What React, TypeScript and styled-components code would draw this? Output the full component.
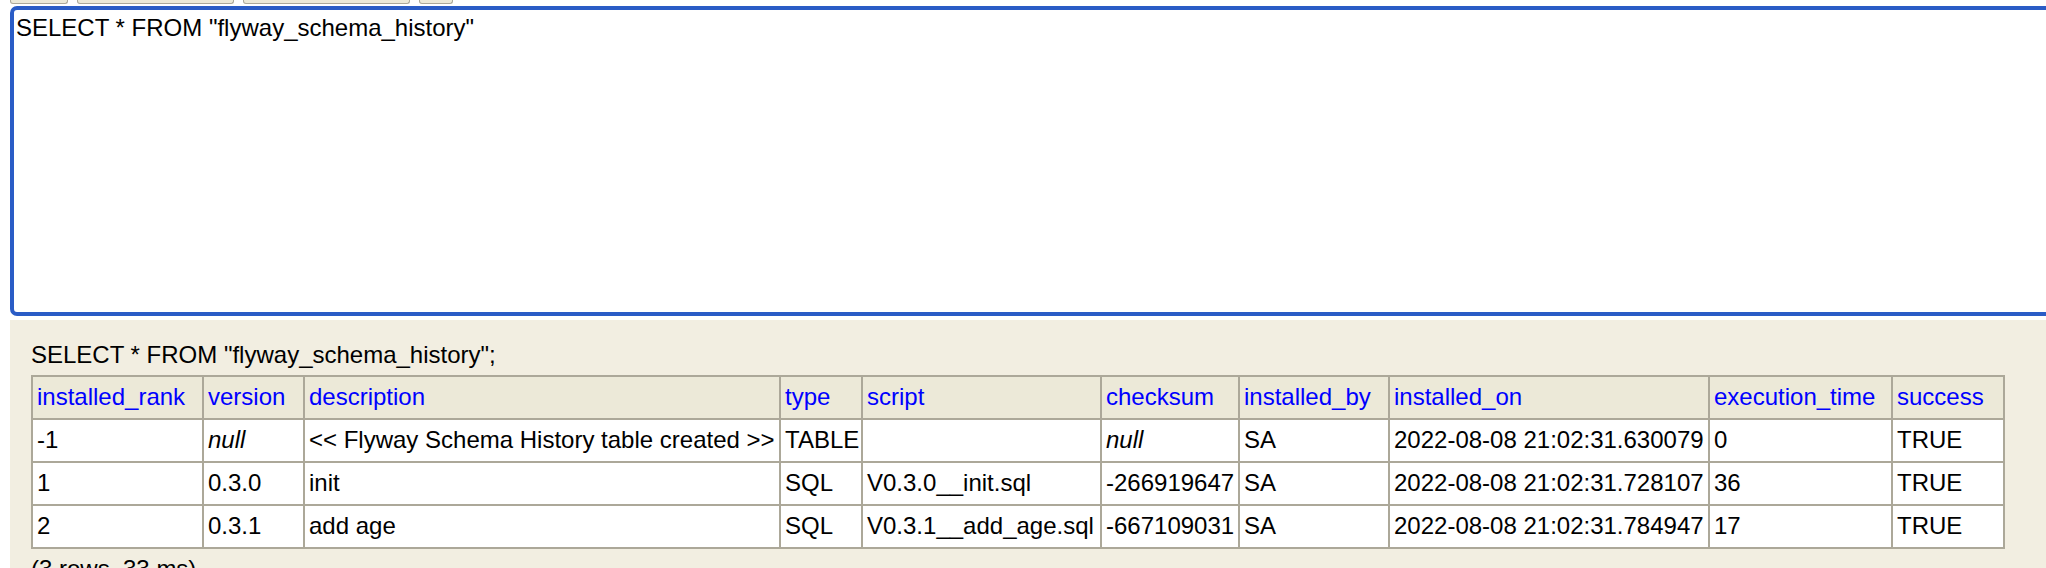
import styled, { createGlobalStyle } from "styled-components";

const GlobalStyle = createGlobalStyle`
    html, body {
        margin: 0;
        padding: 0;
        background: #ffffff;
        overflow: hidden;
    }
    body {
        font-family: "Liberation Sans", Arial, Helvetica, sans-serif;
        font-size: 24px;
        color: #000000;
    }
`

const Page = styled.div`
    display: flex;
    flex-direction: column;
    width: 2046px;
    height: 568px;
    overflow: hidden;

    > * {
        flex-shrink: 0;
    }
`

const TabStrip = styled.div`
    display: flex;
    gap: 9px;
    height: 6px;
    padding-left: 10px;
`

const Tab = styled.div<{$w: number}>`
    width: ${({$w})=>$w}px;
    height: 4px;
    box-sizing: border-box;
    background: #ece9d8;
    border: 1px solid #aca899;
    border-top: none;
    border-radius: 0 0 3px 3px;
`

const QueryInput = styled.textarea`
    display: block;
    box-sizing: border-box;
    margin-left: 10px;
    width: 2060px;
    height: 310px;
    padding: 4px 2px;
    border: 4px solid #2a5cc6;
    border-radius: 7px;
    outline: none;
    resize: none;
    background: #ffffff;
    font-family: "Liberation Sans", Arial, Helvetica, sans-serif;
    font-size: 24px;
    line-height: 28px;
    color: #000000;
`

const ResultPanel = styled.div`
    display: flex;
    flex-direction: column;
    gap: 6px;
    flex-grow: 1;
    margin-top: 4px;
    margin-left: 10px;
    padding: 21px 21px 0 21px;
    background: #f2eee1;
`

const Statement = styled.div`
    line-height: 28px;
`

const ResultTable = styled.table`
    table-layout: fixed;
    width: 1972px;
    border-collapse: collapse;
    border: 2px solid #aca899;
    background: #ffffff;
`

const Col = styled.col<{$w: number}>`
    width: ${({$w})=>$w}px;
`

const HeadCell = styled.th`
    background: #ece9d8;
    border: 2px solid #aca899;
    padding: 6px 4px 7px 4px;
    line-height: 28px;
    text-align: left;
    font-weight: normal;
    color: #0000ff;
    white-space: nowrap;
    overflow: hidden;
`

const Cell = styled.td<{$italic?: boolean}>`
    background: #ffffff;
    border: 2px solid #aca899;
    padding: 6px 4px 7px 4px;
    line-height: 28px;
    text-align: left;
    white-space: nowrap;
    overflow: hidden;
    font-style: ${({$italic})=>$italic ? "italic" : "normal"};
`

const Footer = styled.div`
    line-height: 28px;
`

const tabs = [58, 157, 167, 34]

const columns = [
    {name: "installed_rank", w: 171},
    {name: "version", w: 101},
    {name: "description", w: 476},
    {name: "type", w: 82},
    {name: "script", w: 239},
    {name: "checksum", w: 138},
    {name: "installed_by", w: 150},
    {name: "installed_on", w: 320},
    {name: "execution_time", w: 183},
    {name: "success", w: 112},
]

const rows: string[][] = [
    ["-1", "null", "<< Flyway Schema History table created >>", "TABLE", "", "null", "SA", "2022-08-08 21:02:31.630079", "0", "TRUE"],
    ["1", "0.3.0", "init", "SQL", "V0.3.0__init.sql", "-266919647", "SA", "2022-08-08 21:02:31.728107", "36", "TRUE"],
    ["2", "0.3.1", "add age", "SQL", "V0.3.1__add_age.sql", "-667109031", "SA", "2022-08-08 21:02:31.784947", "17", "TRUE"],
]

export default function App() {
    return (
        <>
            <GlobalStyle/>
            <Page>
                <TabStrip>
                    {tabs.map((w, i) => <Tab key={i} $w={w}/>)}
                </TabStrip>
                <QueryInput readOnly spellCheck={false} value={'SELECT * FROM "flyway_schema_history"'}/>
                <ResultPanel>
                    <Statement>SELECT * FROM "flyway_schema_history";</Statement>
                    <ResultTable>
                        <colgroup>
                            {columns.map(c => <Col key={c.name} $w={c.w}/>)}
                        </colgroup>
                        <thead>
                            <tr>
                                {columns.map(c => <HeadCell key={c.name}>{c.name}</HeadCell>)}
                            </tr>
                        </thead>
                        <tbody>
                            {rows.map((r, i) => (
                                <tr key={i}>
                                    {r.map((v, j) => (
                                        <Cell key={j} $italic={v === "null"}>{v}</Cell>
                                    ))}
                                </tr>
                            ))}
                        </tbody>
                    </ResultTable>
                    <Footer>(3 rows, 33 ms)</Footer>
                </ResultPanel>
            </Page>
        </>
    )
}
